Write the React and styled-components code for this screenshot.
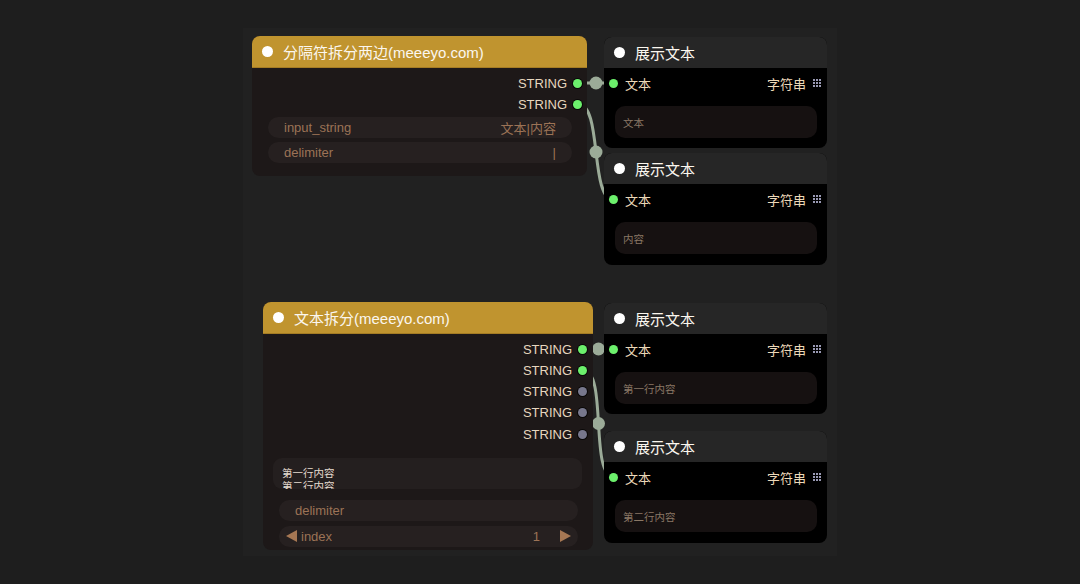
import React from "react";
import styled, { createGlobalStyle } from "styled-components";

const GlobalStyle = createGlobalStyle`
  html, body {
    margin: 0;
    padding: 0;
    background: #1e1e1e;
  }
  body {
    font-family: "Liberation Sans", "Noto Sans CJK SC", sans-serif;
  }
`;

const Page = styled.div`
  width: 1080px;
  height: 584px;
  display: flex;
  align-items: center;
  justify-content: center;
  background: #1e1e1e;
`;

const Canvas = styled.div`
  position: relative;
  width: 594px;
  height: 528px;
  background: #212121;
`;

const Links = styled.svg`
  position: absolute;
  left: 0;
  top: 0;
  z-index: 0;
`;

const Node = styled.div`
  position: absolute;
  left: ${(p) => p.$x}px;
  top: ${(p) => p.$y}px;
  width: ${(p) => p.$w}px;
  height: ${(p) => p.$h}px;
  z-index: 1;
  display: flex;
  flex-direction: column;
  border-radius: 8px;
  overflow: hidden;
  background: ${(p) => p.$body};
`;

const Header = styled.div`
  flex: 0 0 ${(p) => p.$h}px;
  box-sizing: border-box;
  display: flex;
  align-items: center;
  gap: 10px;
  padding-left: 10px;
  background: ${(p) => p.$color};
  border-bottom: 1px solid ${(p) => p.$edge};
  color: #fbf7ef;
  font-size: 15px;
`;

const TitleDot = styled.span`
  width: 11px;
  height: 11px;
  border-radius: 50%;
  background: #fff;
`;

const Body = styled.div`
  flex: 1;
  display: flex;
  flex-direction: column;
  padding-top: ${(p) => p.$pt}px;
`;

const OutRow = styled.div`
  height: ${(p) => p.$h || 21}px;
  display: flex;
  align-items: center;
  justify-content: flex-end;
  gap: 6px;
  padding-right: ${(p) => p.$pr}px;
  color: #e6d6bf;
  font-size: 13px;
`;

const SlotDot = styled.span`
  width: 9px;
  height: 9px;
  border-radius: 50%;
  background: ${(p) => (p.$on ? "#6cf06c" : "#77778c")};
  box-shadow: 0 0 0 1px rgba(0, 0, 0, 0.7);
`;

const Pill = styled.div`
  height: 21px;
  margin: ${(p) => p.$mt}px 15px 0 16px;
  padding: 0 ${(p) => p.$px || 16}px;
  display: flex;
  align-items: center;
  justify-content: space-between;
  border-radius: 11px;
  background: #262020;
  color: #9c7356;
  font-size: 13px;
`;

const Arrow = styled.svg`
  flex: none;
  fill: #a67753;
`;

const IndexLabel = styled.span`
  flex: 1;
  margin-left: 4px;
`;

const IndexValue = styled.span`
  margin-right: 20px;
`;

const MultiText = styled.div`
  height: 31px;
  box-sizing: border-box;
  margin: 13px 11px 0 10px;
  padding: 9px 9px 0;
  border-radius: 9px;
  background: #241f1f;
  color: #e6dcd0;
  font-size: 10.5px;
  line-height: 13px;
  overflow: hidden;
`;

const InRow = styled.div`
  height: 21px;
  display: flex;
  align-items: center;
  gap: 7px;
  padding: 0 6px 0 5px;
  color: #ecd9b9;
  font-size: 13px;
`;

const TypeName = styled.span`
  margin-left: auto;
`;

const Grid = styled.span`
  display: grid;
  grid-template-columns: repeat(3, 2px);
  grid-auto-rows: 2px;
  gap: 1px;
  span {
    background: #9a9ab4;
  }
`;

const Preview = styled.div`
  height: 32px;
  margin: 12.5px 10px 0 11px;
  padding-left: 8px;
  display: flex;
  align-items: center;
  border-radius: 10px;
  background: #161111;
  color: #8a7866;
  font-size: 10.5px;
`;

const ORANGE = { color: "#c0942f", edge: "#a57c24" };
const LINK = "#9bab98";

const GridIcon = () => (
  <Grid>
    {Array.from({ length: 9 }).map((_, i) => (
      <span key={i} />
    ))}
  </Grid>
);

const ShowText = ({ x, y, h, text }) => (
  <Node $x={x} $y={y} $w={223} $h={h} $body="#000">
    <Header $h={31} $color="#262626" $edge="#262626">
      <TitleDot />
      展示文本
    </Header>
    <Body $pt={4.5}>
      <InRow>
        <SlotDot $on />
        文本
        <TypeName>字符串</TypeName>
        <GridIcon />
      </InRow>
      <Preview>{text}</Preview>
    </Body>
  </Node>
);

const links = [
  { d: "M335 55 L371 55", cx: 353, cy: 55 },
  { d: "M335 76 C360 76 346 172 371 172", cx: 353, cy: 124 },
  { d: "M340 321 L371 321", cx: 355.5, cy: 321 },
  { d: "M340 342 C365 342 346 449 371 449", cx: 355.5, cy: 395.5 },
];

export default function App() {
  return (
    <Page>
      <GlobalStyle />
      <Canvas>
        <Links width="594" height="528">
          {links.map((l, i) => (
            <g key={i}>
              <path d={l.d} stroke={LINK} strokeWidth="3" fill="none" />
              <circle cx={l.cx} cy={l.cy} r="6.5" fill={LINK} />
            </g>
          ))}
        </Links>

        <Node $x={9} $y={8} $w={335} $h={140} $body="#1d1818">
          <Header $h={32} $color={ORANGE.color} $edge={ORANGE.edge}>
            <TitleDot />
            分隔符拆分两边(meeeyo.com)
          </Header>
          <Body $pt={4.5}>
            <OutRow $pr={5}>
              STRING <SlotDot $on />
            </OutRow>
            <OutRow $pr={5}>
              STRING <SlotDot $on />
            </OutRow>
            <Pill $mt={2.5}>
              <span>input_string</span>
              <span>文本|内容</span>
            </Pill>
            <Pill $mt={4}>
              <span>delimiter</span>
              <span>|</span>
            </Pill>
          </Body>
        </Node>

        <ShowText x={361} y={9} h={111} text="文本" />
        <ShowText x={361} y={125} h={112} text="内容" />

        <Node $x={20} $y={274} $w={330} $h={248} $body="#1d1818">
          <Header $h={32} $color={ORANGE.color} $edge={ORANGE.edge}>
            <TitleDot />
            文本拆分(meeeyo.com)
          </Header>
          <Body $pt={4.5}>
            {[true, true, false, false, false].map((on, i) => (
              <OutRow key={i} $pr={6} $h={21.25}>
                STRING <SlotDot $on={on} />
              </OutRow>
            ))}
            <MultiText>
              第一行内容
              <br />
              第二行内容
            </MultiText>
            <Pill $mt={11}>
              <span>delimiter</span>
            </Pill>
            <Pill $mt={5} $px={7}>
              <Arrow width="11" height="12" viewBox="0 0 11 12">
                <path d="M0 6 L11 0 L11 12 Z" />
              </Arrow>
              <IndexLabel>index</IndexLabel>
              <IndexValue>1</IndexValue>
              <Arrow width="11" height="12" viewBox="0 0 11 12">
                <path d="M11 6 L0 0 L0 12 Z" />
              </Arrow>
            </Pill>
          </Body>
        </Node>

        <ShowText x={361} y={275} h={111} text="第一行内容" />
        <ShowText x={361} y={403} h={112} text="第二行内容" />
      </Canvas>
    </Page>
  );
}
